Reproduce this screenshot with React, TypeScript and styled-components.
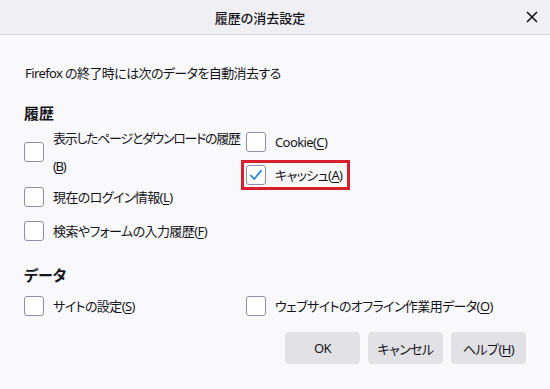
import React from "react";
import styled, { createGlobalStyle } from "styled-components";

const GlobalStyle = createGlobalStyle`
    html, body {
        margin: 0;
        padding: 0;
        background: #f9f9fb;
    }
    body {
        font-family: "Noto Sans", "Noto Sans CJK JP", sans-serif;
        font-size: 13px;
        color: #15141a;
        font-feature-settings: "palt";
        letter-spacing: -0.6px;
    }
`

const Dialog = styled.div`
    width: 550px;
    height: 389px;
    display: flex;
    flex-direction: column;
    background: #f9f9fb;
    overflow: hidden;
`

const TitleBar = styled.div`
    height: 34px;
    flex-shrink: 0;
    display: flex;
    align-items: center;
    background: #f0f0f4;
    border-bottom: 1px solid #d7d7db;
`

const Title = styled.div`
    flex: 1;
    text-align: center;
    font-size: 13px;
    font-weight: 500;
    letter-spacing: 0;
    padding-top: 1px;
`

const CloseButton = styled.button`
    width: 24px;
    height: 24px;
    margin-right: 6px;
    padding: 0;
    border: none;
    background: transparent;
    display: flex;
    align-items: center;
    justify-content: center;
`

const Body = styled.div`
    flex: 1;
    display: flex;
    flex-direction: column;
    padding: 0 24px;
`

const Intro = styled.div`
    margin-top: 28px;
    line-height: 20px;
    padding-left: 1px;
`

const Heading = styled.div<{ $top: number }>`
    margin-top: ${p => p.$top}px;
    font-size: 15px;
    font-weight: 700;
    letter-spacing: 0;
    line-height: 20px;
`

const Grid = styled.div<{ $top: number }>`
    margin-top: ${p => p.$top}px;
    display: grid;
    grid-template-columns: 222px 1fr;
`

const Column = styled.div<{ $shift?: number }>`
    display: flex;
    flex-direction: column;
    padding-top: ${p => p.$shift || 0}px;
`

const Option = styled.label<{ $height: number }>`
    display: flex;
    align-items: center;
    height: ${p => p.$height}px;
`

const OptionBody = styled.span<{ $marked?: boolean }>`
    display: inline-flex;
    align-items: center;
    gap: 9px;
    padding-right: ${p => (p.$marked ? 3 : 0)}px;
    outline: ${p => (p.$marked ? "3px solid #d7202b" : "none")};
    outline-offset: 2px;
`

const Box = styled.span`
    width: 20px;
    height: 20px;
    flex-shrink: 0;
    box-sizing: border-box;
    border: 1px solid #8f8f9d;
    border-radius: 3px;
    background: #fff;
    display: flex;
    align-items: center;
    justify-content: center;
`

const Label = styled.span<{ $wrap?: boolean }>`
    line-height: ${p => (p.$wrap ? 28 : 20)}px;
    white-space: nowrap;
    letter-spacing: ${p => (p.$wrap ? "-1.3px" : "inherit")};
`

const Key = styled.span`
    text-decoration: underline;
    text-underline-offset: 2px;
`

const Footer = styled.div`
    margin-top: 9px;
    display: flex;
    justify-content: flex-end;
    gap: 8px;
`

const Button = styled.button`
    width: 75px;
    height: 32px;
    border: none;
    border-radius: 4px;
    background: #e2e2e6;
    color: #15141a;
    font-family: inherit;
    font-size: 13px;
    font-feature-settings: "palt";
    letter-spacing: -0.6px;
    padding: 0;
`

const CheckBox = ({ checked }: { checked?: boolean }) => (
    <Box>
        {checked && (
            <svg width="16" height="16" viewBox="0 0 16 16">
                <path d="M3 8.6 L6.3 12 L13 3.6" fill="none" stroke="#2b8ad6" strokeWidth="1.8" strokeLinecap="round" strokeLinejoin="round" />
            </svg>
        )}
    </Box>
);

const Item = ({ text, k, height = 34, checked, marked, wrap }: any) => (
    <Option $height={height}>
        <OptionBody $marked={marked}>
            <CheckBox checked={checked} />
            <Label $wrap={wrap}>
                {text}
                {wrap && <br />}(<Key>{k}</Key>)
            </Label>
        </OptionBody>
    </Option>
);

export default function App() {
    return (
        <Dialog>
            <GlobalStyle />
            <TitleBar>
                <Title>履歴の消去設定</Title>
                <CloseButton>
                    <svg width="12" height="12" viewBox="0 0 12 12">
                        <path d="M1 1 L11 11 M11 1 L1 11" stroke="#15141a" strokeWidth="1.6" />
                    </svg>
                </CloseButton>
            </TitleBar>
            <Body>
                <Intro>Firefox の終了時には次のデータを自動消去する</Intro>
                <Heading $top={20}>履歴</Heading>
                <Grid $top={1}>
                    <Column>
                        <Item text="表示したページとダウンロードの履歴" k="B" height={56} wrap />
                        <Item text="現在のログイン情報" k="L" />
                        <Item text="検索やフォームの入力履歴" k="F" />
                    </Column>
                    <Column $shift={1}>
                        <Item text="Cookie" k="C" height={33} />
                        <Item text="キャッシュ" k="A" height={33} checked marked />
                    </Column>
                </Grid>
                <Heading $top={17}>データ</Heading>
                <Grid $top={4}>
                    <Column>
                        <Item text="サイトの設定" k="S" />
                    </Column>
                    <Column>
                        <Item text="ウェブサイトのオフライン作業用データ" k="O" />
                    </Column>
                </Grid>
                <Footer>
                    <Button>OK</Button>
                    <Button>キャンセル</Button>
                    <Button>ヘルプ(<Key>H</Key>)</Button>
                </Footer>
            </Body>
        </Dialog>
    );
}
